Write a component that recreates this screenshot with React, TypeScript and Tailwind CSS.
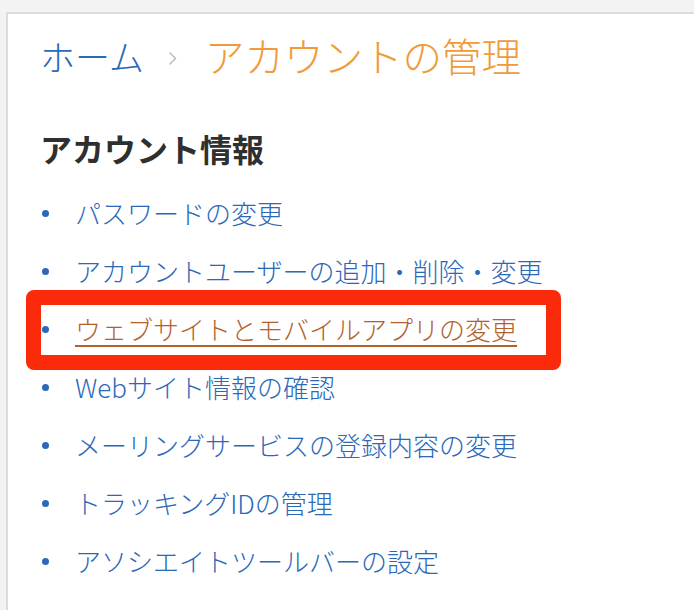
const items = [
  "パスワードの変更",
  "アカウントユーザーの追加・削除・変更",
  "ウェブサイトとモバイルアプリの変更",
  "Webサイト情報の確認",
  "メーリングサービスの登録内容の変更",
  "トラッキングIDの管理",
  "アソシエイトツールバーの設定",
];

const font = { fontFamily: '"Noto Sans CJK JP", "Noto Sans", sans-serif' };

export default function App() {
  return (
    <div className="h-[610px] w-[694px] overflow-hidden bg-[#f3f3f3] pt-[12px] pl-[6px]" style={font}>
      <div className="h-[700px] w-[800px] border-t-2 border-l-2 border-[#dcdcdc] bg-white pt-[13px] pl-[32px]">
        <div className="flex h-[56px] items-center">
          <a className="text-[35px] leading-none font-light text-[#2b68b8]">ホーム</a>
          <svg className="ml-[24px] mr-[28px] mt-[6px]" width="9" height="15" viewBox="0 0 9 15" fill="none">
            <path d="M1.5 1.5 L7.5 7.5 L1.5 13.5" stroke="#b8b8b8" strokeWidth="1.4" />
          </svg>
          <span className="text-[39.5px] leading-none font-light text-[#f09a3a]">アカウントの管理</span>
        </div>

        <h2 className="mt-[45px] h-[40px] text-[32px] leading-[40px] font-bold text-[#2f2f2f]">アカウント情報</h2>

        <ul className="mt-[16px]">
          {items.map((t, i) => (
            <li key={t} className="relative flex h-[58px] items-center">
              <span className="ml-[2px] h-[7px] w-[7px] rounded-full bg-[#2b68b8]" />
              <a
                className={
                  i === 2
                    ? "ml-[26px] text-[26px] leading-none font-light text-[#b3612a] underline decoration-2 underline-offset-[5px]"
                    : "ml-[26px] text-[26px] leading-none font-light text-[#2b68b8]"
                }
              >
                {t}
              </a>
              {i === 2 && (
                <div className="pointer-events-none absolute top-[-10px] left-[-14px] h-[80px] w-[535px] rounded-[8px] border-[15px] border-[#fb2a0b]" />
              )}
            </li>
          ))}
        </ul>
      </div>
    </div>
  );
}
